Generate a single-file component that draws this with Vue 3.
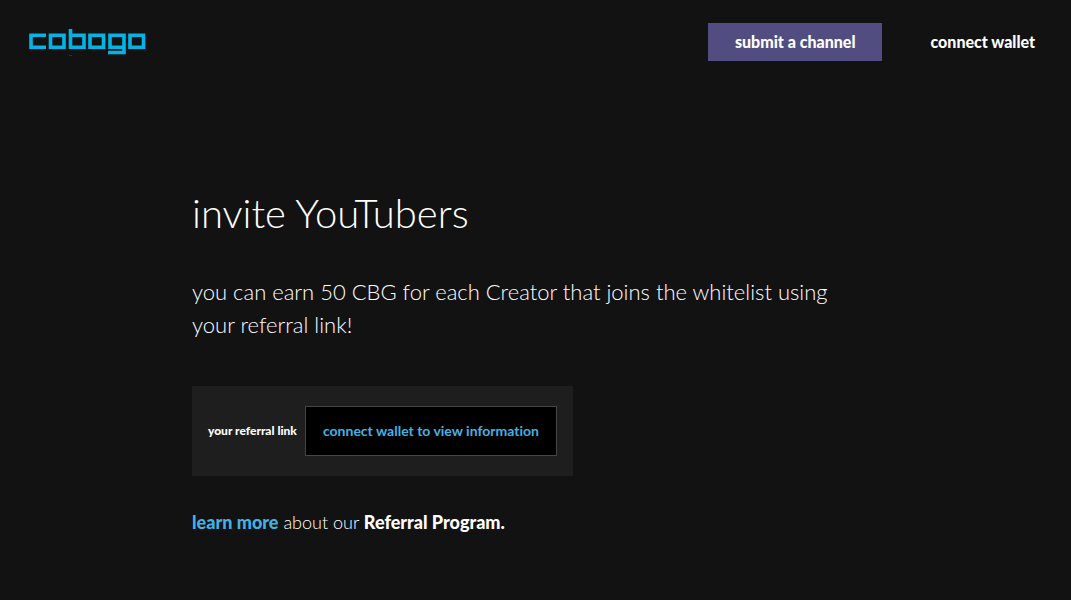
<script setup>
const brand = 'cobogo'
</script>

<template>
  <div class="page">
    <header class="bar">
      <a class="logo" href="#" :aria-label="brand">
        <svg width="117" height="28" viewBox="0 0 117 28" fill="none" stroke="#00b4e6" stroke-width="3.6" aria-hidden="true">
          <path d="M17 7.300H2V19.300H17" />
          <path d="M21.500 7.300H35V19.300H21.500Z" />
          <path d="M41.500 1V19.300H55V7.300H41.500" />
          <path d="M61 7.300H74.500V19.300H61Z" />
          <path d="M95 19.300H81V7.300H95V24.500H79" />
          <path d="M101 7.300H114.500V19.300H101Z" />
          <path d="M40 27.500H43" stroke="#0d3d48" stroke-width="1" />
        </svg>
      </a>
      <nav class="actions">
        <button type="button" class="submit">submit a channel</button>
        <button type="button" class="connect">connect wallet</button>
      </nav>
    </header>
    <main class="content">
      <h1>invite YouTubers</h1>
      <p class="intro">you can earn 50 CBG for each Creator that joins the whitelist using your referral link!</p>
      <section class="referral">
        <span class="caption">your referral link</span>
        <button type="button" class="reveal">connect wallet to view information</button>
      </section>
      <p class="more"><a href="#">learn more</a> about our <strong>Referral Program.</strong></p>
    </main>
  </div>
</template>

<style>
body {
  margin: 0;
  background: #121212;
}
</style>

<style scoped>
.page {
  min-height: 100vh;
  box-sizing: border-box;
  background: #121212;
  color: #fff;
  font-family: Lato, "Open Sans", sans-serif;
  font-variant-ligatures: none;
}
.bar {
  display: flex;
  justify-content: space-between;
  align-items: center;
  height: 84px;
  padding: 0 12px 0 29px;
}
.logo,
.logo svg {
  display: block;
}
.actions {
  display: flex;
  gap: 24px;
}
button {
  margin: 0;
  border: 0;
  font-family: inherit;
  font-variant-ligatures: inherit;
  font-weight: 900;
  color: #fff;
  cursor: pointer;
}
.submit,
.connect {
  height: 38px;
  padding: 0 24px 2px;
  font-size: 16px;
  background: none;
}
.submit {
  padding: 0 27px 2px;
  background: #524d80;
}
.content {
  padding: 103px 192px 64px;
}
h1 {
  margin: 0;
  font-size: 40px;
  line-height: 52px;
  font-weight: 300;
}
.intro {
  max-width: 660px;
  margin: 36px 0 0;
  font-size: 22px;
  line-height: 33px;
  font-weight: 300;
}
.referral {
  display: flex;
  align-items: center;
  gap: 8px;
  width: fit-content;
  box-sizing: border-box;
  margin-top: 45px;
  padding: 20px 16px;
  background: #1e1e1e;
}
.caption {
  padding-bottom: 2px;
  font-size: 12px;
  font-weight: 900;
}
.reveal {
  height: 50px;
  padding: 0 17px 2px;
  border: 1px solid #464646;
  background: #000;
  color: #43b1e6;
  font-size: 14px;
  font-weight: 700;
}
.more {
  margin: 34px 0 0;
  font-size: 18px;
  line-height: 24px;
  font-weight: 300;
}
.more a {
  color: #43b1e6;
  font-weight: 900;
  text-decoration: none;
}
strong {
  font-weight: 900;
}
</style>
